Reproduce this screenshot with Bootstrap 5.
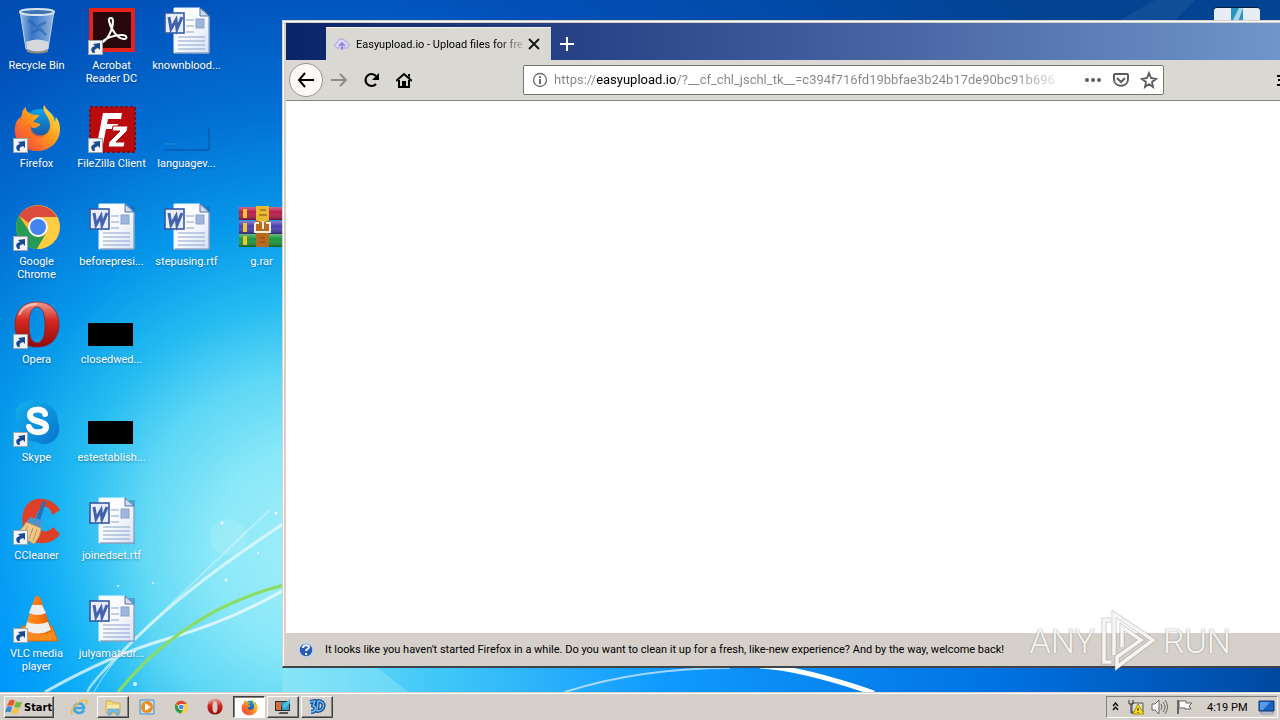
<!DOCTYPE html>
<html lang="en">
<head>
<meta charset="utf-8">
<meta name="viewport" content="width=device-width, initial-scale=1">
<title>Desktop</title>
<link href="https://cdn.jsdelivr.net/npm/bootstrap@5.3.0/dist/css/bootstrap.min.css" rel="stylesheet">
<style>
:root{--face:#d5d0c9;--chrome:#dad8d3}
body{font-family:Roboto,"Liberation Sans",sans-serif;font-size:11px;line-height:13px;color:#000}
button{font:inherit;color:inherit}
.wallpaper{inset:0;z-index:0}
.desk{z-index:1;grid-template-rows:repeat(7,98px);grid-auto-columns:73px;grid-auto-flow:column;column-gap:2px;width:max-content}
.shortcut{color:#fff;padding-top:7px;text-shadow:0 1px 2px #00306080}
.shortcut:hover{color:#fff}
.shortcut svg{width:48px;height:48px;margin-bottom:4px;flex:none;overflow:visible}
.archive{grid-column:4;grid-row:3}
.win{z-index:2;top:20px;bottom:24px;left:282px;right:-22px;background:var(--face);border:1px solid #d5d0c9;border-bottom:2px solid #404448;padding:2px 2px 0 3px;box-shadow:inset 1px 1px #fff}
.titlebar{height:37px;background:linear-gradient(90deg,#0a246a,#43609f 56%,#7397cd);padding:4px 0 0 40px}
.tab{width:225px;background:var(--chrome);border-top:1px solid #f4f2ee;padding:0 12px 0 8px;gap:6px}
.tabname{width:166px;-webkit-mask-image:linear-gradient(90deg,#000 85%,#0003);mask-image:linear-gradient(90deg,#000 85%,#0003)}
.bare{background:none;border:0;padding:0;display:flex}
.tools{height:41px;background:var(--chrome);border-bottom:1px solid #85847f;padding:0 16px 0 3px}
.back{width:34px;height:34px;border-radius:50%;background:#fbfaf8;border:1px solid #98958f;align-items:center;justify-content:center}
.urlbar{width:641px;height:30px;margin-left:111px;background:#fff;border:1px solid #777570;border-radius:2px;padding:0 5px 0 8px}
.url{width:501px;margin:0 29px 0 6px;padding:0;border:0;outline:0;font-size:13px;line-height:20px;background:linear-gradient(90deg,#858585 0 42px,#000 42px 122px,#858585 122px 460px,#85858540);-webkit-background-clip:text;background-clip:text;-webkit-text-fill-color:transparent}
.notice{height:33px;background:var(--face);padding-left:12px;gap:11px}
.hiddenbar{z-index:1;top:8px;right:20px;width:46px;height:14px;border-radius:3px 3px 0 0;background:#e9edf3;box-shadow:0 -1px #0a1f40}
.brand{z-index:3;right:49px;bottom:20px;gap:6px;font-weight:300;font-size:34px;line-height:60px;color:#f6f5f3;text-shadow:0 0 2px #8889,0 0 1px #8889}
.taskbar{z-index:4;height:28px;background:var(--face);border-top:1px solid #d5d0c9;box-shadow:inset 0 1px #fff;padding:3px 2px 2px 4px}
.raised{background:var(--face);border:1px solid;border-color:#fff #404040 #404040 #fff;box-shadow:inset -1px -1px #808080}
.pressed{background:#fff;border:1px solid;border-color:#404040 #fff #fff #404040;box-shadow:inset 1px 1px #808080}
.start{width:50px;font-weight:700;font-family:"DejaVu Sans Condensed","DejaVu Sans",sans-serif;gap:1px;padding:0;margin-right:9px}
.slots{gap:2px}
.slot{width:32px;padding:0;align-items:center;justify-content:center;display:flex}
.tray{width:172px;border:1px solid;border-color:#808080 #fff #fff #808080;padding:0 1px 0 4px}
</style>
</head>
<body>
<svg class="position-absolute" width="0" height="0" aria-hidden="true">
<defs>
<linearGradient id="gPaper" x1="0" y1="0" x2="1" y2="1"><stop stop-color="#fff"/><stop offset=".5" stop-color="#f8fafe"/><stop offset="1" stop-color="#d5e0f6"/></linearGradient>
<linearGradient id="gFox" x1="1" y1="0" x2="0" y2="1"><stop stop-color="#fff44f"/><stop offset=".45" stop-color="#ff9a1a"/><stop offset="1" stop-color="#f5304a"/></linearGradient>
<linearGradient id="gBlue" x1="0" y1="0" x2="0" y2="1"><stop stop-color="#0aa5e8"/><stop offset="1" stop-color="#203d92"/></linearGradient>
<linearGradient id="gOp" x1="0" y1="0" x2="0" y2="1"><stop stop-color="#ee9c92"/><stop offset=".4" stop-color="#d52a20"/><stop offset="1" stop-color="#92080a"/></linearGradient>
<linearGradient id="gSky" x1="0" y1="0" x2="1" y2="1"><stop stop-color="#12b0ee"/><stop offset="1" stop-color="#0874cc"/></linearGradient>
<linearGradient id="gBin" x1="0" y1="0" x2="1" y2="0"><stop stop-color="#d8e6f2" stop-opacity=".75"/><stop offset=".35" stop-color="#5a8ed0" stop-opacity=".6"/><stop offset="1" stop-color="#c8dcf0" stop-opacity=".75"/></linearGradient>
<linearGradient id="gCone"><stop stop-color="#ff9a30"/><stop offset=".5" stop-color="#ff7a10"/><stop offset="1" stop-color="#d85800"/></linearGradient>
<linearGradient id="gStack" x1="0" y1="0" x2="0" y2="1"><stop stop-color="#fff" stop-opacity=".35"/><stop offset=".4" stop-color="#fff" stop-opacity="0"/><stop offset="1" stop-color="#000" stop-opacity=".4"/></linearGradient>
<symbol id="arrow" viewBox="0 0 15 15"><rect x=".5" y=".5" width="14" height="14" fill="#f4f4f4" stroke="#9ca4b0"/><path d="M5 13C2 10 3 7 7 6L5 4l7-1v7l-2-2C7 9 6 10 7 13z" fill="#184a94"/></symbol>
<symbol id="doc" viewBox="0 0 48 48"><path d="M12 3h35v44H13z" fill="#2a5690" opacity=".35"/><path d="M11 1h26l9 8v37H11z" fill="url(#gPaper)" stroke="#eef3fb"/><path d="M37 1v8h9z" fill="#cfdcf2" stroke="#50709f"/><path d="M46 9v37H12" fill="none" stroke="#6681ac"/><path d="M23 13h8M23 19h8M23 25h8M15 30h27M15 34h27M15 38h27M15 42h27" stroke="#8ba1c9"/><rect x="33" y="12" width="8" height="9" fill="#9fb6dc" stroke="#8aa1cb"/><rect x="2" y="6" width="19" height="20" fill="#e7edf9" stroke="#3658a3" stroke-width="1.6"/><path d="M6 10l2 12 5-9 1 9 5-12" fill="none" stroke="#4262ab" stroke-width="3"/></symbol>
<symbol id="firefox" viewBox="0 0 48 48"><circle cx="27" cy="22" r="18" fill="url(#gBlue)"/><path d="M31 0c-3 7 5 10 6 19 1 8-6 14-13 12-5-1-7-5-6-9 3 2 6 1 9-2 1-2-4-2-7-3 2-3 6-5 6-7-6 0-9-1-11-3-2-1-2-3-2-5-5 3-3 7-5 10C3 15 1 21 2 29c2 11 12 18 24 17 12-1 21-10 21-22 0-6-2-9-4-12-1 2 0 4-1 5C41 9 35 7 31 0z" fill="url(#gFox)"/><path d="M18 23c2 7 10 9 16 5-4 8-18 8-22-1-2-5 1-8 6-8z" fill="#ff6b24" opacity=".6"/></symbol>
<symbol id="chrome" viewBox="0 0 48 48"><circle cx="25" cy="24" r="22" fill="#fbc02d"/><path d="M6 13a22 22 0 0 1 38 1H25a10 10 0 0 0-9 6z" fill="#dd4b3e"/><path d="M6 13a22 22 0 0 0 18 33l10-17a10 10 0 0 1-17 0z" fill="#279b56"/><path d="M34 29l-10 17a22 22 0 0 0 20-32H25a10 10 0 0 1 9 15z" fill="#ffcd40"/><circle cx="25" cy="24" r="10" fill="#f5f5f5"/><circle cx="25" cy="24" r="8" fill="#4384f0"/></symbol>
<symbol id="opera" viewBox="0 0 48 48"><path fill-rule="evenodd" d="M24 1C9 1 2 11 2 24s8 22 22 22 22-9 22-22S39 1 24 1zm0 5c6 0 8 8 8 18s-2 18-8 18-8-8-8-18 2-18 8-18z" fill="url(#gOp)" stroke="#9d1714" stroke-width=".7"/><path d="M6 14C10 5 17 3 24 3" fill="none" stroke="#fff" opacity=".5" stroke-width="2"/></symbol>
</defs>
</svg>

<div class="vh-100 d-flex flex-column overflow-hidden">
<main class="position-relative flex-grow-1 overflow-hidden">
<svg class="wallpaper position-absolute w-100 h-100" viewBox="0 0 1280 692" preserveAspectRatio="none" aria-hidden="true">
<defs>
<radialGradient id="glow" gradientUnits="userSpaceOnUse" cx="310" cy="550" r="900"><stop stop-color="#a2eefa"/><stop offset=".11" stop-color="#8ae8f8"/><stop offset=".2" stop-color="#5cd6f5"/><stop offset=".28" stop-color="#22baf1"/><stop offset=".37" stop-color="#0698ea"/><stop offset=".49" stop-color="#0270d4"/><stop offset=".64" stop-color="#0250b8"/><stop offset="1" stop-color="#024392"/></radialGradient>
<linearGradient id="floor"><stop stop-color="#7ce0f6"/><stop offset=".15" stop-color="#42c8f7"/><stop offset=".38" stop-color="#109aff"/><stop offset=".72" stop-color="#0072e2"/><stop offset="1" stop-color="#0048a0"/></linearGradient>
<linearGradient id="left"><stop stop-color="#0098ff" stop-opacity=".9"/><stop offset="1" stop-color="#00b0ff" stop-opacity="0"/></linearGradient>
<linearGradient id="fade" x1="0" y1="0" x2="0" y2="1"><stop stop-color="#fff" stop-opacity="0"/><stop offset="1" stop-color="#fff"/></linearGradient>
<mask id="low"><rect y="420" width="150" height="272" fill="url(#fade)"/></mask>
</defs>
<rect width="1280" height="692" fill="url(#glow)"/>
<rect y="420" width="150" height="272" fill="url(#left)" mask="url(#low)"/>
<rect x="283" y="660" width="997" height="32" fill="url(#floor)"/>
<path d="M283 668h95l30 24H283z" fill="#a0edf8" opacity=".35"/>
<g fill="none" stroke="#fff">
<path d="M283 524Q190 585 138 636T88 692" stroke-width="3" opacity=".6"/>
<path d="M270 510Q205 570 140 635" stroke-width="2" opacity=".3"/>
<path d="M140 635Q110 662 94 692" stroke-width="1" opacity=".6"/>
<path d="M45 692Q110 655 170 638T284 590" stroke-width="3" opacity=".7"/>
<path d="M565 692Q640 668 730 668" stroke-width="2" opacity=".6"/>
<path d="M760 666Q800 668 874 693" stroke-width="5"/>
</g>
<path d="M118 692Q185 610 284 585" fill="none" stroke="#8bdc62" stroke-width="3"/>
<g fill="#fff" opacity=".8"><circle cx="226" cy="580" r="1.500"/><circle cx="222" cy="523" r="1.500"/><circle cx="276" cy="513" r="1.500"/><circle cx="153" cy="583" r="1"/><circle cx="118" cy="586" r="1"/><circle cx="135" cy="684" r="2"/><circle cx="258" cy="553" r="1"/></g>
<circle cx="228" cy="537" r="18" fill="#fff" opacity=".12"/>
<path d="M1120 20L1155 0h40l-20 20z" fill="#fff" opacity=".06"/>
</svg>

<nav class="desk d-grid position-relative text-center" aria-label="Desktop icons">
<a href="#" class="shortcut d-flex flex-column align-items-center text-decoration-none"><svg viewBox="0 0 48 48"><path d="M7 4l6 38q11 6 22 0l6-38z" fill="url(#gBin)" stroke="#b8d0e8"/><ellipse cx="24" cy="5" rx="17" ry="3" fill="#4274b4" stroke="#d8e4f0" stroke-width="2"/><path d="M13 35q11-5 23 0l-1 8q-11 5-21 0z" fill="#d5d8dc"/><path d="M14 42q11 5 21 0v3q-11 3-21 0z" fill="#8d8a82"/><path d="M15 13l9 7 9-5M18 26l9-4 6 6" stroke="#2465b4" stroke-width="3" fill="none" opacity=".6"/></svg>Recycle Bin</a>
<a href="#" class="shortcut d-flex flex-column align-items-center text-decoration-none"><svg viewBox="0 0 48 48"><use href="#firefox"/><use href="#arrow" x="0" y="33" width="15" height="15"/></svg>Firefox</a>
<a href="#" class="shortcut d-flex flex-column align-items-center text-decoration-none"><svg viewBox="0 0 48 48"><use href="#chrome"/><use href="#arrow" x="0" y="33" width="15" height="15"/></svg>Google Chrome</a>
<a href="#" class="shortcut d-flex flex-column align-items-center text-decoration-none"><svg viewBox="0 0 48 48"><use href="#opera"/><use href="#arrow" x="0" y="33" width="15" height="15"/></svg>Opera</a>
<a href="#" class="shortcut d-flex flex-column align-items-center text-decoration-none"><svg viewBox="0 0 48 48"><path d="M14 2c4-1 8 0 11 1 12 0 20 9 20 20 4 9-1 21-13 22-4 0-6-1-8-2C12 43 4 34 4 23 0 13 4 4 14 2z" fill="url(#gSky)"/><path d="M32 15c-1-6-15-6-15 1 0 8 16 5 16 12 0 7-15 7-17 0" fill="none" stroke="#fff" stroke-width="6" stroke-linecap="round"/><use href="#arrow" x="0" y="33" width="15" height="15"/></svg>Skype</a>
<a href="#" class="shortcut d-flex flex-column align-items-center text-decoration-none"><svg viewBox="0 0 48 48"><path d="M47 13C39 0 21-2 13 9c-7 10-4 29 7 35 10 5 22 1 27-7l-7-7c-4 6-13 6-16-1-4-8 1-19 8-19 4 0 6 3 7 8z" fill="#df3f27"/><path d="M30 4l3 1-6 18-4-2z" fill="#2b6eb4"/><path d="M17 20l13 4-2 6-15-4z" fill="#4b93cf"/><path d="M13 25l15 6c0 6-3 11-7 16L2 36c5-2 9-6 11-11z" fill="#efc98c" stroke="#c5924e"/><path d="M15 29l-5 9M20 31l-4 11M24 32l-4 12" stroke="#c5924e"/><use href="#arrow" x="0" y="33" width="15" height="15"/></svg>CCleaner</a>
<a href="#" class="shortcut d-flex flex-column align-items-center text-decoration-none"><svg viewBox="0 0 48 48"><path d="M9 31h30l6 15H7z" fill="#f98a1d" stroke="#d76a09"/><path d="M24 1q3 0 4 4l11 31q-15 8-28 0L21 5q1-4 3-4z" fill="url(#gCone)"/><path d="M19 10h10l4 8q-8 4-17 0zM14 27q10 4 21 0l3 8q-13 7-26 0z" fill="#eeeef0"/><use href="#arrow" x="0" y="33" width="15" height="15"/></svg>VLC media player</a>

<a href="#" class="shortcut d-flex flex-column align-items-center text-decoration-none"><svg viewBox="0 0 48 48"><rect x="3" y="3" width="42" height="40" fill="#28080a" stroke="#e5231b" stroke-width="4"/><path d="M13 36c6-2 12-13 12-22 0-4-5-4-4 0 2 9 9 18 15 18 4 0 3-4-2-4-8 0-17 3-21 8z" fill="none" stroke="#fff" stroke-width="2"/><use href="#arrow" x="0" y="33" width="15" height="15"/></svg>Acrobat Reader DC</a>
<a href="#" class="shortcut d-flex flex-column align-items-center text-decoration-none"><svg viewBox="0 0 48 48"><rect x="2" y="2" width="45" height="45" fill="#b90b0d" stroke="#8d080b" stroke-width="2" stroke-dasharray="3 2"/><path d="M15 8h19l-1 6H20l-1 5h11l-1 5H18l-3 15h-6z" fill="#fff"/><path d="M25 21h15l-1 5-11 11h9l-1 5H20l1-5 11-11h-8z" fill="#fff" stroke="#b90b0d"/><use href="#arrow" x="0" y="33" width="15" height="15"/></svg>FileZilla Client</a>
<a href="#" class="shortcut d-flex flex-column align-items-center text-decoration-none"><svg viewBox="0 0 48 48"><use href="#doc"/></svg>beforepresi...</a>
<a href="#" class="shortcut d-flex flex-column align-items-center text-decoration-none"><svg viewBox="0 0 48 48"><rect y="22" width="45" height="23"/></svg>closedwed...</a>
<a href="#" class="shortcut d-flex flex-column align-items-center text-decoration-none"><svg viewBox="0 0 48 48"><rect y="22" width="45" height="23"/></svg>estestablish...</a>
<a href="#" class="shortcut d-flex flex-column align-items-center text-decoration-none"><svg viewBox="0 0 48 48"><use href="#doc"/></svg>joinedset.rtf</a>
<a href="#" class="shortcut d-flex flex-column align-items-center text-decoration-none"><svg viewBox="0 0 48 48"><use href="#doc"/></svg>julyamateur...</a>

<a href="#" class="shortcut d-flex flex-column align-items-center text-decoration-none"><svg viewBox="0 0 48 48"><use href="#doc"/></svg>knownblood...</a>
<a href="#" class="shortcut d-flex flex-column align-items-center text-decoration-none"><svg viewBox="0 0 48 48"><path d="M1 45h45V23" fill="none" stroke="#0a4c9c"/><path d="M2 39h10" stroke="#2890d0"/></svg>languagev...</a>
<a href="#" class="shortcut d-flex flex-column align-items-center text-decoration-none"><svg viewBox="0 0 48 48"><use href="#doc"/></svg>stepusing.rtf</a>
<a href="#" class="archive shortcut d-flex flex-column align-items-center text-decoration-none"><svg viewBox="0 0 48 48"><rect x="1" y="4" width="46" height="13" fill="#b81c4c"/><rect x="1" y="18" width="46" height="13" fill="#4b3fae"/><rect x="1" y="31" width="46" height="13" fill="#19973c"/><path d="M1 4h46v13H1z" fill="url(#gStack)"/><path d="M1 18h46v13H1z" fill="url(#gStack)"/><path d="M1 31h46v13H1z" fill="url(#gStack)"/><path d="M5 6h4v9H5zM5 20h4v9H5zM5 33h4v9H5z" fill="#f0c52e"/><path d="M18 3h13v41H18z" fill="#b66b20"/><path d="M18 3h13v14l-6 3-7-3z" fill="#eab934"/><path d="M17 20v9h15v-9h-4M21 20h-4M25 18v8" fill="none" stroke="#f2efe2" stroke-width="2"/><path d="M22 7h6M21 12h8M22 35h5M22 39h5" stroke="#7d4b14"/></svg>g.rar</a>
</nav>

<div class="hiddenbar position-absolute d-flex justify-content-center overflow-hidden"><svg width="12" height="14" viewBox="0 0 12 14"><path d="M0 0h12v14H0z" fill="#2a95bd"/><path d="M2 12L8 0h4L7 14H2z" fill="#a7d7e8"/></svg></div>

<section class="win position-absolute d-flex flex-column" aria-label="Browser">
<div class="titlebar d-flex">
<div class="tab d-flex align-items-center">
<svg class="flex-shrink-0" width="16" height="14" viewBox="0 0 16 14"><path d="M4 11C0 11 0 6 3 6c0-4 7-6 9-1 4 0 4 6 0 6z" fill="#dcd6f6" stroke="#aaa0de"/><path d="M8 13V7M5 9l3-3 3 3" fill="none" stroke="#8a7cd8" stroke-width="1.500"/></svg>
<span class="tabname text-nowrap">Easyupload.io - Upload files for fre</span>
<button class="bare ms-auto" aria-label="Close tab"><svg width="12" height="12" viewBox="0 0 12 12"><path d="M1 1l10 10M11 1L1 11" stroke="#111" stroke-width="1.800"/></svg></button>
</div>
<button class="bare align-items-center ps-2" aria-label="New tab"><svg width="16" height="16" viewBox="0 0 16 16"><path d="M8 1v14M1 8h14" stroke="#fff" stroke-width="2"/></svg></button>
</div>
<div class="tools d-flex align-items-center flex-shrink-0">
<button class="bare back" aria-label="Back"><svg width="18" height="18" viewBox="0 0 18 18" fill="none" stroke="#000" stroke-width="2"><path d="M17 9H2M8 2L2 9l6 7"/></svg></button>
<button class="bare ms-2" aria-label="Forward"><svg width="17" height="16" viewBox="0 0 17 16" fill="none" stroke="#8f8d89" stroke-width="2"><path d="M0 8h15M9 2l6 6-6 6"/></svg></button>
<button class="bare ms-3" aria-label="Reload"><svg width="16" height="16" viewBox="0 0 16 16"><path d="M12 12A6 6 0 1 1 12 4" fill="none" stroke="#000" stroke-width="2.200"/><path d="M15 1v7H8z"/></svg></button>
<button class="bare ms-3" aria-label="Home"><svg width="16" height="16" viewBox="0 0 16 16"><path d="M0 9l8-7 8 7M3 8v7h10V8" fill="none" stroke="#000" stroke-width="2"/><path d="M12 2h2v4l-2-2zM6 9h4v6H6z"/></svg></button>
<div class="urlbar d-flex align-items-center flex-shrink-0">
<svg class="flex-shrink-0" width="16" height="16" viewBox="0 0 16 16"><circle cx="8" cy="8" r="6.500" fill="none" stroke="#6c6c6c" stroke-width="1.300"/><path d="M7 7h2v5H7zM7 4h2v2H7z" fill="#6c6c6c"/></svg>
<input class="url flex-shrink-0" type="text" aria-label="Address" value="https://easyupload.io/?__cf_chl_jschl_tk__=c394f716fd19bbfae3b24b17de90bc91b696">
<button class="bare" aria-label="Page actions"><svg width="18" height="16" viewBox="0 0 18 16" fill="#5b5b5b"><circle cx="3" cy="8" r="2"/><circle cx="9" cy="8" r="2"/><circle cx="15" cy="8" r="2"/></svg></button>
<button class="bare ms-auto" aria-label="Save to Pocket"><svg width="18" height="16" viewBox="0 0 18 16" fill="none" stroke="#5b5b5b" stroke-width="2"><path d="M3 2h12q1 0 1 1v4c0 9-14 9-14 0V3q0-1 1-1z"/><path d="M5 6l4 4 4-4"/></svg></button>
<button class="bare ms-auto" aria-label="Bookmark"><svg width="18" height="18" viewBox="0 0 18 18"><path d="M9 2l2 5 5 1-4 3 1 5-4-3-4 3 1-5-4-3 5-1z" fill="none" stroke="#5b5b5b" stroke-width="1.800"/></svg></button>
</div>
<button class="bare ms-auto" aria-label="Library"><svg width="6" height="14" viewBox="0 0 6 14"><path d="M0 3h6M1 7h5M0 12h6" stroke="#000" stroke-width="2"/></svg></button>
</div>
<div class="bg-white flex-grow-1"></div>
<div class="notice d-flex align-items-center text-nowrap">
<svg width="16" height="16" viewBox="0 0 16 16"><circle cx="8" cy="8" r="7" fill="#2a5cb8" stroke="#c3d3ee" stroke-width="1.500"/><path d="M5 6c0-4 6-3 6-1 0 2-3 2-3 4" fill="none" stroke="#fff" stroke-width="1.800"/><path d="M7 11h2v2H7z" fill="#fff"/></svg>
<span>It looks like you haven't started Firefox in a while. Do you want to clean it up for a fresh, like-new experience? And by the way, welcome back!</span>
</div>
</section>

<div class="brand position-absolute d-flex align-items-center"><span>ANY</span><svg width="56" height="62" viewBox="0 0 56 62"><g fill="none" stroke="#8887" stroke-width="5"><path d="M10 10H3v42h7"/><path d="M13 45V4l39 26-36 27V47l24-17-19-13v20"/></g><g fill="none" stroke="#f6f5f3" stroke-width="3.500"><path d="M10 10H3v42h7"/><path d="M13 45V4l39 26-36 27V47l24-17-19-13v20"/></g></svg><span>RUN</span></div>
</main>

<footer class="taskbar d-flex flex-shrink-0">
<button class="start raised d-flex align-items-center"><svg width="18" height="18" viewBox="-1 -1 20 20"><path d="M4 2c3-2 4-1 6 0L8 8C6 7 4 7 1 8z" fill="#e8562a"/><path d="M11 3c3 1 4 1 7 0l-2 6c-2 1-4 1-7 0z" fill="#76b83f"/><path d="M1 9c3-1 4-1 6 0l-2 6c-2-1-3-1-6 0z" fill="#3c86d2"/><path d="M8 10c3 1 4 1 7 0l-2 6c-3 1-5 0-7-1z" fill="#f8c43a"/></svg>Start</button>
<div class="slots d-flex">
<button class="bare slot" aria-label="Internet Explorer"><svg width="18" height="18" viewBox="0 0 18 18"><path d="M14 12c-3 5-10 3-10-2s9-7 10 0H5" fill="none" stroke="#3aa5e4" stroke-width="2.500"/><path d="M3 16c-5 0 3-13 12-14 3 0 2 3 1 5" fill="none" stroke="#efbd35" stroke-width="1.500"/></svg></button>
<button class="slot raised" aria-label="Explorer"><svg width="18" height="18" viewBox="0 0 18 18"><path d="M2 3h6l1 2h7v10H2z" fill="#f2d77c" stroke="#d3ae55"/><path d="M3 7h12v4H3z" fill="#f9eaaa"/><path d="M4 17v-6h11v6h-3v-3H7v3z" fill="#79bde8" stroke="#4184b8" stroke-width=".5"/></svg></button>
<button class="bare slot" aria-label="Media Player"><svg width="18" height="18" viewBox="0 0 18 18"><path d="M2 2h14v14H2z" fill="#bdddf5" stroke="#4b8fc9"/><circle cx="9" cy="9" r="6" fill="#f38a16"/><path d="M7 5l6 4-6 4z" fill="#fff"/></svg></button>
<button class="bare slot" aria-label="Chrome"><svg width="14" height="14" viewBox="0 0 48 48"><use href="#chrome"/></svg></button>
<button class="bare slot" aria-label="Opera"><svg width="16" height="16" viewBox="0 0 48 48"><use href="#opera"/></svg></button>
<button class="slot pressed" aria-label="Firefox"><svg width="17" height="17" viewBox="0 0 48 48"><use href="#firefox"/></svg></button>
<button class="slot raised" aria-label="Display tool"><svg width="18" height="16" viewBox="0 0 18 16"><path d="M1 2h15v10H1z" fill="#2a2d33"/><path d="M2 3h5v8H2z" fill="#d96b34"/><path d="M7 3h8v8H8z" fill="#2f9ec9"/><path d="M6 13h8v2H4z" fill="#555"/><path d="M9 6l7-6v4l-6 6z" fill="#4fc1e4"/></svg></button>
<button class="slot raised" aria-label="3D viewer"><svg width="20" height="18" viewBox="0 0 20 18" fill="none" stroke-linejoin="round"><path d="M3 4l5-1-2 5c4 0 3 6-2 6M11 3l-1 10c8 0 9-10 1-10z" stroke="#174d94" stroke-width="4"/><path d="M3 4l5-1-2 5c4 0 3 6-2 6M11 3l-1 10c8 0 9-10 1-10z" stroke="#70bdf0" stroke-width="1.500"/></svg></button>
</div>
<div class="tray ms-auto d-flex align-items-center justify-content-between">
<button class="bare" aria-label="Show hidden icons"><svg width="9" height="10" viewBox="0 0 9 10" fill="none" stroke="#000" stroke-width="1.300"><path d="M2 4l2.500-3L7 4M2 8l2.500-3L7 8"/></svg></button>
<svg width="18" height="16" viewBox="0 0 18 16"><path d="M5 4h11v9H5z" fill="#dedede" stroke="#555"/><path d="M2 1v4h4V1M4 5v9h4" fill="none" stroke="#333"/><path d="M11 5l6 10H6z" fill="#ffe11a" stroke="#a68b00"/><path d="M11 9v3M11 13v1" stroke="#000"/></svg>
<svg width="18" height="16" viewBox="0 0 18 16" fill="none" stroke="#666"><path d="M1 5h3l4-4v14l-4-4H1z" fill="#f7f7f7"/><path d="M10 5q2 3 0 6M12 3q4 5 0 10M14 1q5 7 0 14"/></svg>
<svg width="17" height="16" viewBox="0 0 17 16"><path d="M2 1v14" stroke="#666" stroke-width="2"/><path d="M3 2h7v2h6l-3 3 2 3H9V9H3z" fill="#f9f9f9" stroke="#666"/></svg>
<time class="ps-2 pe-1">4:19 PM</time>
<svg width="18" height="16" viewBox="0 0 18 16"><path d="M1 2h15v10H1z" fill="#1962c1" stroke="#0c336c"/><path d="M2 3h10L5 11H2z" fill="#5a9be8"/><path d="M3 13h12v2H3z" fill="#cadcf0" stroke="#557" stroke-width=".5"/></svg>
</div>
</footer>
</div>
<script src="https://cdn.jsdelivr.net/npm/bootstrap@5.3.0/dist/js/bootstrap.bundle.min.js"></script>
</body>
</html>
